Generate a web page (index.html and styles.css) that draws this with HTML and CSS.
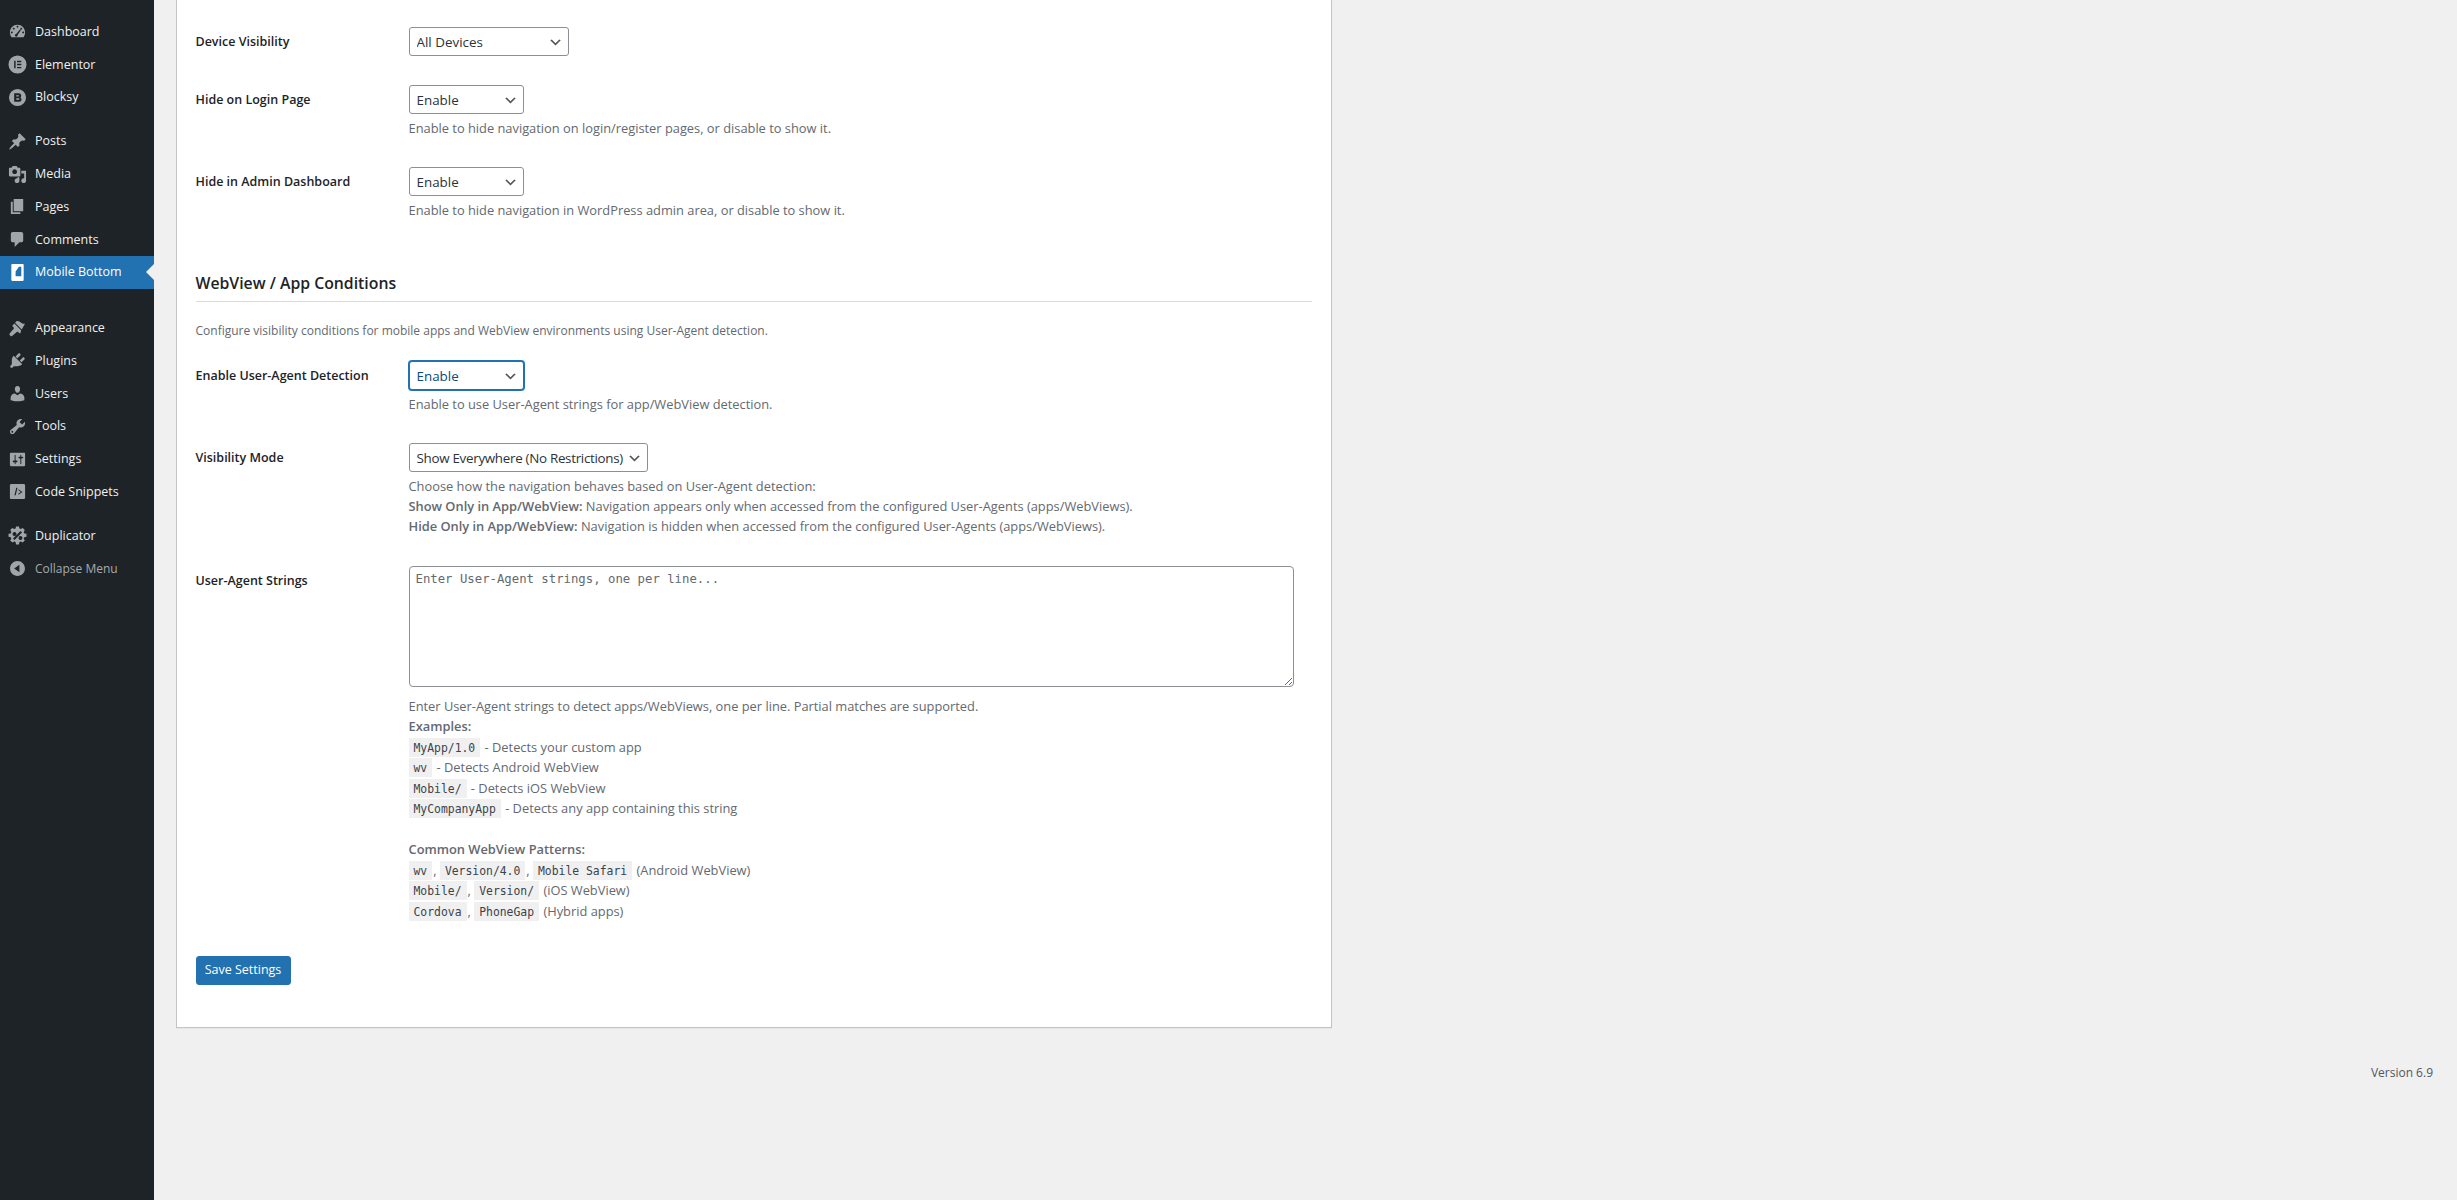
FILE: index.html
```html
<!DOCTYPE html>
<html lang="en">
<head>
    <meta charset="UTF-8">
    <title>Mobile Bottom Settings</title>
    <link rel="stylesheet" href="styles.css">
</head>
<body>
    <nav class="sidebar">
        <ul class="menu">
            <li class="menu-item"><svg class="icon" viewBox="0 0 20 20"><path fill-rule="evenodd" d="M3.76 16h12.48c1.1-1.37 1.76-3.1 1.76-5 0-4.42-3.58-8-8-8s-8 3.58-8 8c0 1.9.66 3.63 1.76 5zM10 4c.55 0 1 .45 1 1s-.45 1-1 1-1-.45-1-1 .45-1 1-1zM6 6c.55 0 1 .45 1 1s-.45 1-1 1-1-.45-1-1 .45-1 1-1zm8 0c.55 0 1 .45 1 1s-.45 1-1 1-1-.45-1-1 .45-1 1-1zm-5.37 6.500L12.800 7.600l.9.7-3.600 5.300c.2.8-.3 1.600-1.100 1.800-.8.2-1.600-.3-1.800-1.100-.1-.9.5-1.700 1.430-1.800zM4 10c.55 0 1 .45 1 1s-.45 1-1 1-1-.45-1-1 .45-1 1-1zm12 0c.55 0 1 .45 1 1s-.45 1-1 1-1-.45-1-1 .45-1 1-1z"/></svg>Dashboard</li>
            <li class="menu-item"><svg class="icon" viewBox="0 0 20 20"><path fill-rule="evenodd" d="M10 .5a9.500 9.500 0 1 1 0 19 9.500 9.500 0 0 1 0-19zM6.500 6v8H8V6zm3 0v1.500H14V6zm0 3.200v1.600H14V9.200zm0 3.300V14H14v-1.500z"/></svg>Elementor</li>
            <li class="menu-item"><svg class="icon" viewBox="0 0 20 20"><path fill-rule="evenodd" d="M10 1a9 9 0 1 1 0 18 9 9 0 0 1 0-18zM6.500 5.500v9h5.300c1.500 0 2.400-1 2.400-2.400 0-.9-.4-1.600-1.100-2.100.5-.5.8-1.100.8-1.800 0-1.500-1-2.700-2.400-2.700zm2.200 2h2.200c.4 0 .7.300.7.700s-.3.800-.7.800H8.700zm0 3.300h2.600c.5 0 .8.300.8.800s-.3.800-.8.800H8.700z"/></svg>Blocksy</li>
        </ul>
        <ul class="menu menu-group">
            <li class="menu-item"><svg class="icon" viewBox="0 0 20 20"><path d="M10.440 3.020l1.820-1.820 6.360 6.350-1.830 1.820c-1.050-.68-2.480-.57-3.410.36l-.75.75c-.92.930-1.040 2.350-.35 3.410l-1.830 1.820-2.410-2.410-2.800 2.790c-.42.420-3.380 2.710-3.800 2.290s1.860-3.390 2.280-3.810l2.790-2.790L4.100 9.360l1.830-1.820c1.050.690 2.480.570 3.400-.36l.75-.75c.930-.92 1.050-2.350.360-3.410z"/></svg>Posts</li>
            <li class="menu-item"><svg class="icon" viewBox="0 0 20 20"><path fill-rule="evenodd" d="M13 11V4c0-.55-.45-1-1-1h-1.670L9 1H5L3.670 3H2c-.55 0-1 .45-1 1v7c0 .55.45 1 1 1h10c.55 0 1-.45 1-1zM7 4.500c1.380 0 2.500 1.120 2.500 2.500S8.380 9.500 7 9.500 4.500 8.380 4.500 7 5.620 4.500 7 4.500zM14 6h5v10.500c0 1.380-1.120 2.500-2.500 2.500S14 17.880 14 16.500s1.120-2.500 2.500-2.500c.17 0 .34.020.5.050V9h-3V6zm-4 8.050V13h2v3.500c0 1.380-1.120 2.500-2.500 2.500S7 17.880 7 16.500 8.120 14 9.500 14c.17 0 .34.020.5.050z"/></svg>Media</li>
            <li class="menu-item"><svg class="icon" viewBox="0 0 20 20"><path d="M6 15V2h10v13H6zm-1 1h8v2H3V5h2v11z"/></svg>Pages</li>
            <li class="menu-item"><svg class="icon" viewBox="0 0 20 20"><path d="M5 2h9c1.100 0 2 .9 2 2v7c0 1.100-.9 2-2 2h-2l-5 5v-5H5c-1.100 0-2-.9-2-2V4c0-1.100.9-2 2-2z"/></svg>Comments</li>
            <li class="menu-item menu-item-active"><svg class="icon" viewBox="0 0 20 20"><path fill-rule="evenodd" d="M4.500 1h11c.5 0 1 .5 1 1v16c0 .5-.5 1-1 1h-11c-.5 0-1-.5-1-1V2c0-.5.5-1 1-1zm3.500 13h6V4h-2.500L8 9z"/></svg>Mobile Bottom</li>
        </ul>
        <ul class="menu menu-group-wide">
            <li class="menu-item"><svg class="icon" viewBox="0 0 20 20"><path d="M14.480 11.060L7.410 3.990l1.500-1.500c.5-.56 2.300-.47 3.510.32 1.210.8 1.430 1.280 2.660 1.870 1.230.59 2.260.39 2.920.16zm-.71.71L6.700 4.700 4.930 6.470c-.39.39-.39 1.020 0 1.410l1.060 1.060c.39.39.39 1.030 0 1.420l-4.240 5.010c-.39.390-.39 1.020 0 1.420l1.060 1.060c.4.390 1.030.39 1.420 0l5.010-4.250c.39-.39 1.030-.39 1.420 0l1.060 1.060c.39.39 1.020.39 1.410 0z"/></svg>Appearance</li>
            <li class="menu-item"><svg class="icon" viewBox="0 0 20 20"><path d="M13.110 4.360L9.870 7.600 8 5.730l3.240-3.240c.35-.34 1.050-.2 1.560.32.52.51.66 1.210.31 1.550zm-8 1.770l.91-1.120 9.010 9.010-1.190.84c-.71.71-2.630 1.160-3.820 1.160H6.140L4.900 17.260c-.59.59-1.540.59-2.120 0-.59-.58-.59-1.530 0-2.120l1.240-1.240v-3.880c0-1.130.4-3.180 1.090-3.890zm7.260 3.970l3.240-3.240c.34-.35 1.040-.21 1.550.31.52.51.66 1.210.31 1.550l-3.240 3.250z"/></svg>Plugins</li>
            <li class="menu-item"><svg class="icon" viewBox="0 0 20 20"><path d="M10 9.250c-2.270 0-2.730-3.440-2.730-3.440C7 4.020 7.820 2 9.970 2c2.160 0 2.980 2.020 2.710 3.810 0 0-.41 3.440-2.680 3.440zm0 2.570L12.720 10c2.390 0 4.520 2.330 4.520 4.530v2.490s-3.650 1.130-7.240 1.130c-3.650 0-7.240-1.130-7.240-1.130v-2.490c0-2.250 1.940-4.480 4.470-4.480z"/></svg>Users</li>
            <li class="menu-item"><svg class="icon" viewBox="0 0 20 20"><path fill-rule="evenodd" d="M16.680 9.770c-1.340 1.340-3.300 1.670-4.950.99l-5.410 6.520c-.99.99-2.590.99-3.580 0s-.99-2.590 0-3.570l6.520-5.420c-.68-1.650-.35-3.610.99-4.950 1.280-1.280 3.120-1.620 4.720-1.060l-2.890 2.890 2.820 2.820 2.860-2.870c.53 1.580.18 3.390-1.080 4.650zM3.810 16.210c.4.390 1.030.39 1.420 0 .4-.4.400-1.030 0-1.430-.39-.39-1.020-.39-1.420 0-.4.4-.4 1.030 0 1.430z"/></svg>Tools</li>
            <li class="menu-item"><svg class="icon" viewBox="0 0 20 20"><path fill-rule="evenodd" d="M18 16V4c0-.55-.45-1-1-1H3c-.55 0-1 .45-1 1v12c0 .55.45 1 1 1h14c.55 0 1-.45 1-1zM8 11h1c.55 0 1 .45 1 1s-.45 1-1 1H8v1.500c0 .28-.22.5-.5.5s-.5-.22-.5-.5V13H6c-.55 0-1-.45-1-1s.45-1 1-1h1V5.500c0-.28.22-.5.5-.5s.5.22.5.5V11zm5-2h-1c-.55 0-1-.45-1-1s.45-1 1-1h1V5.500c0-.28.22-.5.5-.5s.5.22.5.5V7h1c.55 0 1 .45 1 1s-.45 1-1 1h-1v5.500c0 .28-.22.5-.5.5s-.5-.22-.5-.5V9z"/></svg>Settings</li>
            <li class="menu-item"><svg class="icon" viewBox="0 0 20 20"><path fill-rule="evenodd" d="M3.500 2h13c.8 0 1.500.7 1.500 1.500v13c0 .8-.7 1.500-1.500 1.500h-13c-.8 0-1.500-.7-1.500-1.500v-13C2 2.700 2.700 2 3.500 2zm5.200 4L6.800 14h1.300l1.900-8zm2.300 1.500v1.300l2.600 1.700-2.600 1.700v1.300l4.200-3z"/></svg>Code Snippets</li>
        </ul>
        <ul class="menu menu-group">
            <li class="menu-item"><svg class="icon icon-large" viewBox="0 0 20 20"><path fill-rule="evenodd" d="M8.500 1h3l.4 2 1.500.6 1.800-1.100 2.100 2.100-1.100 1.800.6 1.500 2.200.4v3l-2.200.4-.6 1.500 1.100 1.800-2.100 2.100-1.800-1.100-1.500.6-.4 2.400h-3l-.4-2.400-1.500-.6-1.800 1.100-2.100-2.100 1.100-1.800-.6-1.500-2.200-.4v-3l2.200-.4.6-1.500-1.100-1.800 2.100-2.100 1.800 1.100 1.500-.6zM13 5.500l-7.500 7.500 1.500 1.500 7.500-7.500zM7 6.500a2 2 0 1 0 0 4 2 2 0 0 0 0-4zm6 4a2 2 0 1 0 0 4 2 2 0 0 0 0-4z"/></svg>Duplicator</li>
            <li class="menu-item menu-item-muted"><svg class="icon" viewBox="0 0 20 20"><path fill-rule="evenodd" d="M10 2.160c4.330 0 7.840 3.510 7.840 7.840S14.330 17.840 10 17.840 2.160 14.330 2.160 10 5.670 2.160 10 2.160zM12 14V6l-5.500 4z"/></svg>Collapse Menu</li>
        </ul>
    </nav>

    <main class="main">
        <form class="card">
            <div class="field">
                <label class="field-label">Device Visibility</label>
                <div class="field-body">
                    <select class="select select-medium"><option>All Devices</option></select>
                </div>
            </div>
            <div class="field">
                <label class="field-label">Hide on Login Page</label>
                <div class="field-body">
                    <select class="select select-short"><option>Enable</option></select>
                    <p class="hint">Enable to hide navigation on login/register pages, or disable to show it.</p>
                </div>
            </div>
            <div class="field">
                <label class="field-label">Hide in Admin Dashboard</label>
                <div class="field-body">
                    <select class="select select-short"><option>Enable</option></select>
                    <p class="hint">Enable to hide navigation in WordPress admin area, or disable to show it.</p>
                </div>
            </div>

            <h2 class="section-title">WebView / App Conditions</h2>
            <p class="section-desc">Configure visibility conditions for mobile apps and WebView environments using User-Agent detection.</p>

            <div class="field">
                <label class="field-label">Enable User-Agent Detection</label>
                <div class="field-body">
                    <select class="select select-short select-focus"><option>Enable</option></select>
                    <p class="hint">Enable to use User-Agent strings for app/WebView detection.</p>
                </div>
            </div>
            <div class="field field-mode">
                <label class="field-label">Visibility Mode</label>
                <div class="field-body">
                    <select class="select select-wide"><option>Show Everywhere (No Restrictions)</option></select>
                    <p class="hint">Choose how the navigation behaves based on User-Agent detection:<br>
                    <strong>Show Only in App/WebView:</strong> Navigation appears only when accessed from the configured User-Agents (apps/WebViews).<br>
                    <strong>Hide Only in App/WebView:</strong> Navigation is hidden when accessed from the configured User-Agents (apps/WebViews).</p>
                </div>
            </div>
            <div class="field field-last">
                <label class="field-label">User-Agent Strings</label>
                <div class="field-body">
                    <textarea class="textarea" placeholder="Enter User-Agent strings, one per line..."></textarea>
                    <p class="hint hint-code">Enter User-Agent strings to detect apps/WebViews, one per line. Partial matches are supported.<br>
                    <strong>Examples:</strong><br>
                    <code>MyApp/1.0</code> - Detects your custom app<br>
                    <code>wv</code> - Detects Android WebView<br>
                    <code>Mobile/</code> - Detects iOS WebView<br>
                    <code>MyCompanyApp</code> - Detects any app containing this string<br>
                    <br>
                    <strong>Common WebView Patterns:</strong><br>
                    <code>wv</code>, <code>Version/4.0</code>, <code>Mobile Safari</code> (Android WebView)<br>
                    <code>Mobile/</code>, <code>Version/</code> (iOS WebView)<br>
                    <code>Cordova</code>, <code>PhoneGap</code> (Hybrid apps)</p>
                </div>
            </div>

            <button class="button" type="button">Save Settings</button>
        </form>
        <footer class="footer">Version 6.9</footer>
    </main>
</body>
</html>
```

FILE: styles.css
```css
* {
    box-sizing: border-box;
}

html, body {
    height: 100%;
}

body {
    margin: 0;
    display: flex;
    overflow: hidden;
    background-color: #f0f0f1;
    color: #3c434a;
    font-family: "Open Sans", "Noto Sans", sans-serif;
    font-size: 12.5px;
    line-height: 20px;
}

/* Admin menu */
.sidebar {
    flex: 0 0 154px;
    padding-top: 15.5px;
    background-color: #1d2327;
}

.menu {
    list-style: none;
    margin: 0;
    padding: 0;
}

.menu-group {
    margin-top: 11.3px;
}

.menu-group-wide {
    margin-top: 23px;
}

.menu-item {
    position: relative;
    display: flex;
    align-items: center;
    gap: 8px;
    height: 32.75px;
    padding-left: 8px;
    color: #f0f0f1;
}

.icon {
    flex: 0 0 19px;
    width: 19px;
    height: 19px;
    fill: #a0a5aa;
}

.icon-large {
    transform: scale(1.05);
}

.menu-item-active {
    background-color: #2271b1;
    color: #fff;
}

.menu-item-active .icon {
    fill: #fff;
}

/* little arrow pointing at the content */
.menu-item-active::after {
    content: "";
    position: absolute;
    right: 0;
    top: 50%;
    margin-top: -8px;
    border: 8px solid transparent;
    border-right-color: #f0f0f1;
    border-left-width: 0;
}

.menu-item-muted {
    color: #a7aaad;
    font-size: 12px;
}

/* Content */
.main {
    flex: 1;
    min-width: 0;
    padding: 0 24px 0 22px;
}

.card {
    width: 1156px;
    padding: 27px 19px 42px 18.5px;
    background-color: #fff;
    border: 1px solid #c3c4c7;
    border-top: 0;
    box-shadow: 0 1px 1px rgba(0, 0, 0, 0.04);
}

.field {
    display: grid;
    grid-template-columns: 213px 1fr;
    margin-bottom: 29px;
}

.field-mode {
    margin-bottom: 30px;
}

.field-last {
    margin-bottom: 34.5px;
}

.field-label {
    align-self: start;
    padding-top: 5px;
    color: #1d2327;
    font-weight: 600;
}

.select {
    display: block;
    height: 29px;
    padding: 0 22px 0 7px;
    border: 1px solid #8c8f94;
    border-radius: 3px;
    background: #fff url("data:image/svg+xml;charset=UTF-8,%3Csvg xmlns='http://www.w3.org/2000/svg' width='20' height='20'%3E%3Cpath d='M5 6l5 5 5-5 2 1-7 7-7-7z' fill='%23555'/%3E%3C/svg%3E") no-repeat right 5px top 55%;
    background-size: 15px 15px;
    color: #2c3338;
    font: inherit;
    font-size: 13.4px;
    appearance: none;
}

.select-short {
    width: 115px;
}

.select-medium {
    width: 160px;
}

.select-wide {
    width: 239px;
    padding-right: 18px;
    letter-spacing: -0.3px;
}

.select-focus {
    border-color: #2271b1;
    box-shadow: 0 0 0 1px #2271b1;
    color: #0a4b78;
}

.hint {
    margin: 4px 0 0;
    color: #646970;
    font-size: 12.85px;
}

.hint strong {
    font-weight: 600;
}

.hint-code {
    margin-top: 8.5px;
    line-height: 20.5px;
}

code {
    padding: 3px 5px 2px;
    margin: 0 1px 0 0;
    background-color: #f0f0f1;
    color: #3c434a;
    font-family: "DejaVu Sans Mono", "Liberation Mono", monospace;
    font-size: 11.4px;
    line-height: 1;
}

.section-title {
    margin: 52px 0 0;
    padding-bottom: 7px;
    border-bottom: 1px solid #dcdcde;
    color: #1d2327;
    font-size: 15.8px;
    font-weight: 600;
    line-height: 22px;
}

.section-desc {
    margin: 19px 0 20px;
    color: #646970;
    font-size: 12px;
}

.textarea {
    display: block;
    width: 885px;
    height: 121px;
    padding: 2px 6px;
    border: 1px solid #8c8f94;
    border-radius: 4px;
    background-color: #fff;
    font-family: "DejaVu Sans Mono", "Liberation Mono", monospace;
    font-size: 12.3px;
    line-height: 20px;
}

.textarea::placeholder {
    color: #646970;
}

.button {
    display: block;
    width: 95px;
    height: 29px;
    padding: 0;
    border: 1px solid #2271b1;
    border-radius: 3px;
    background-color: #2271b1;
    color: #fff;
    font: inherit;
}

.footer {
    margin-top: 35px;
    text-align: right;
    color: #50575e;
    font-size: 12px;
}
```
